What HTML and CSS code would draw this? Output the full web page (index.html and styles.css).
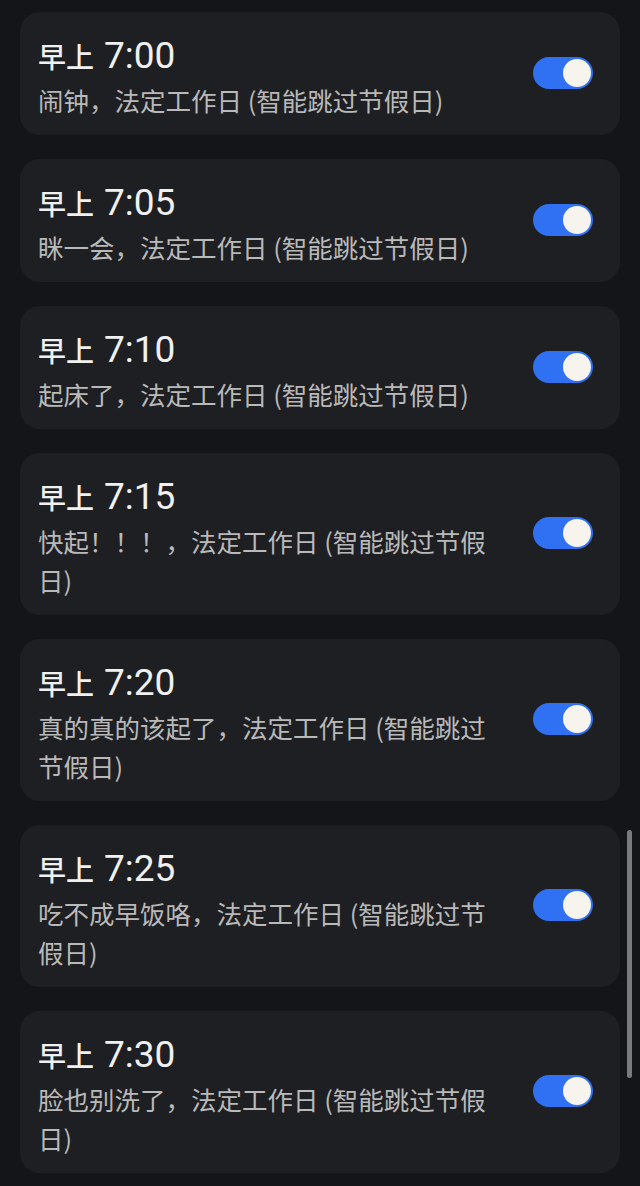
FILE: index.html
```html
<!DOCTYPE html>
<html lang="zh-CN">
<head>
<meta charset="utf-8">
<title>闹钟</title>
<link rel="stylesheet" href="styles.css">
</head>
<body>
<main class="list">
  <section class="card">
    <div class="info">
      <div class="time"><span class="period">早上</span><span class="clock">7:00</span></div>
      <div class="desc">闹钟，法定工作日 (智能跳过节假日)</div>
    </div>
    <span class="toggle on"><span class="thumb"></span></span>
  </section>
  <section class="card">
    <div class="info">
      <div class="time"><span class="period">早上</span><span class="clock">7:05</span></div>
      <div class="desc">眯一会，法定工作日 (智能跳过节假日)</div>
    </div>
    <span class="toggle on"><span class="thumb"></span></span>
  </section>
  <section class="card">
    <div class="info">
      <div class="time"><span class="period">早上</span><span class="clock">7:10</span></div>
      <div class="desc">起床了，法定工作日 (智能跳过节假日)</div>
    </div>
    <span class="toggle on"><span class="thumb"></span></span>
  </section>
  <section class="card">
    <div class="info">
      <div class="time"><span class="period">早上</span><span class="clock">7:15</span></div>
      <div class="desc">快起！！！，法定工作日 (智能跳过节假日)</div>
    </div>
    <span class="toggle on"><span class="thumb"></span></span>
  </section>
  <section class="card">
    <div class="info">
      <div class="time"><span class="period">早上</span><span class="clock">7:20</span></div>
      <div class="desc">真的真的该起了，法定工作日 (智能跳过节假日)</div>
    </div>
    <span class="toggle on"><span class="thumb"></span></span>
  </section>
  <section class="card">
    <div class="info">
      <div class="time"><span class="period">早上</span><span class="clock">7:25</span></div>
      <div class="desc">吃不成早饭咯，法定工作日 (智能跳过节假日)</div>
    </div>
    <span class="toggle on"><span class="thumb"></span></span>
  </section>
  <section class="card">
    <div class="info">
      <div class="time"><span class="period">早上</span><span class="clock">7:30</span></div>
      <div class="desc">脸也别洗了，法定工作日 (智能跳过节假日)</div>
    </div>
    <span class="toggle on"><span class="thumb"></span></span>
  </section>
  <div class="scrollbar"></div>
</main>
</body>
</html>
```

FILE: styles.css
```css
html, body {
  margin: 0;
  padding: 0;
  background: #141518;
}

body {
  font-family: "Noto Sans CJK SC", "Noto Sans", sans-serif;
  color: #eeeeee;
  width: 640px;
  height: 1186px;
  overflow: hidden;
}

.list {
  position: relative;
  display: flex;
  flex-direction: column;
  gap: 24px;
  padding: 12px 20px 0 20px;
}

.card {
  display: flex;
  align-items: center;
  justify-content: space-between;
  background: #1e1f22;
  border-radius: 20px;
  padding: 22px 27px 16px 18px;
}

.info {
  flex: 0 1 460px;
  display: flex;
  flex-direction: column;
}

.time {
  height: 44px;
  line-height: 44px;
  white-space: nowrap;
  color: #f0f0f0;
}

.period {
  font-family: "Noto Sans CJK SC", sans-serif;
  font-size: 28px;
  font-weight: 500;
}

.clock {
  font-family: Roboto, "Noto Sans", sans-serif;
  font-size: 37px;
  margin-left: 10px;
}

.desc {
  margin-top: 2px;
  font-size: 25.5px;
  line-height: 39px;
  color: #b9b9b9;
}

.toggle {
  flex: none;
  width: 60px;
  height: 32px;
  border-radius: 16px;
  background: #2f71f2;
  display: flex;
  align-items: center;
  justify-content: flex-end;
  padding: 0 2px;
  box-sizing: border-box;
  margin-top: -8px;
}

.thumb {
  width: 28px;
  height: 28px;
  border-radius: 50%;
  background: #f6f4ec;
}

.scrollbar {
  position: absolute;
  left: 627px;
  top: 830px;
  width: 5px;
  height: 248px;
  border-radius: 3px;
  background: #7a7a7c;
}
```
